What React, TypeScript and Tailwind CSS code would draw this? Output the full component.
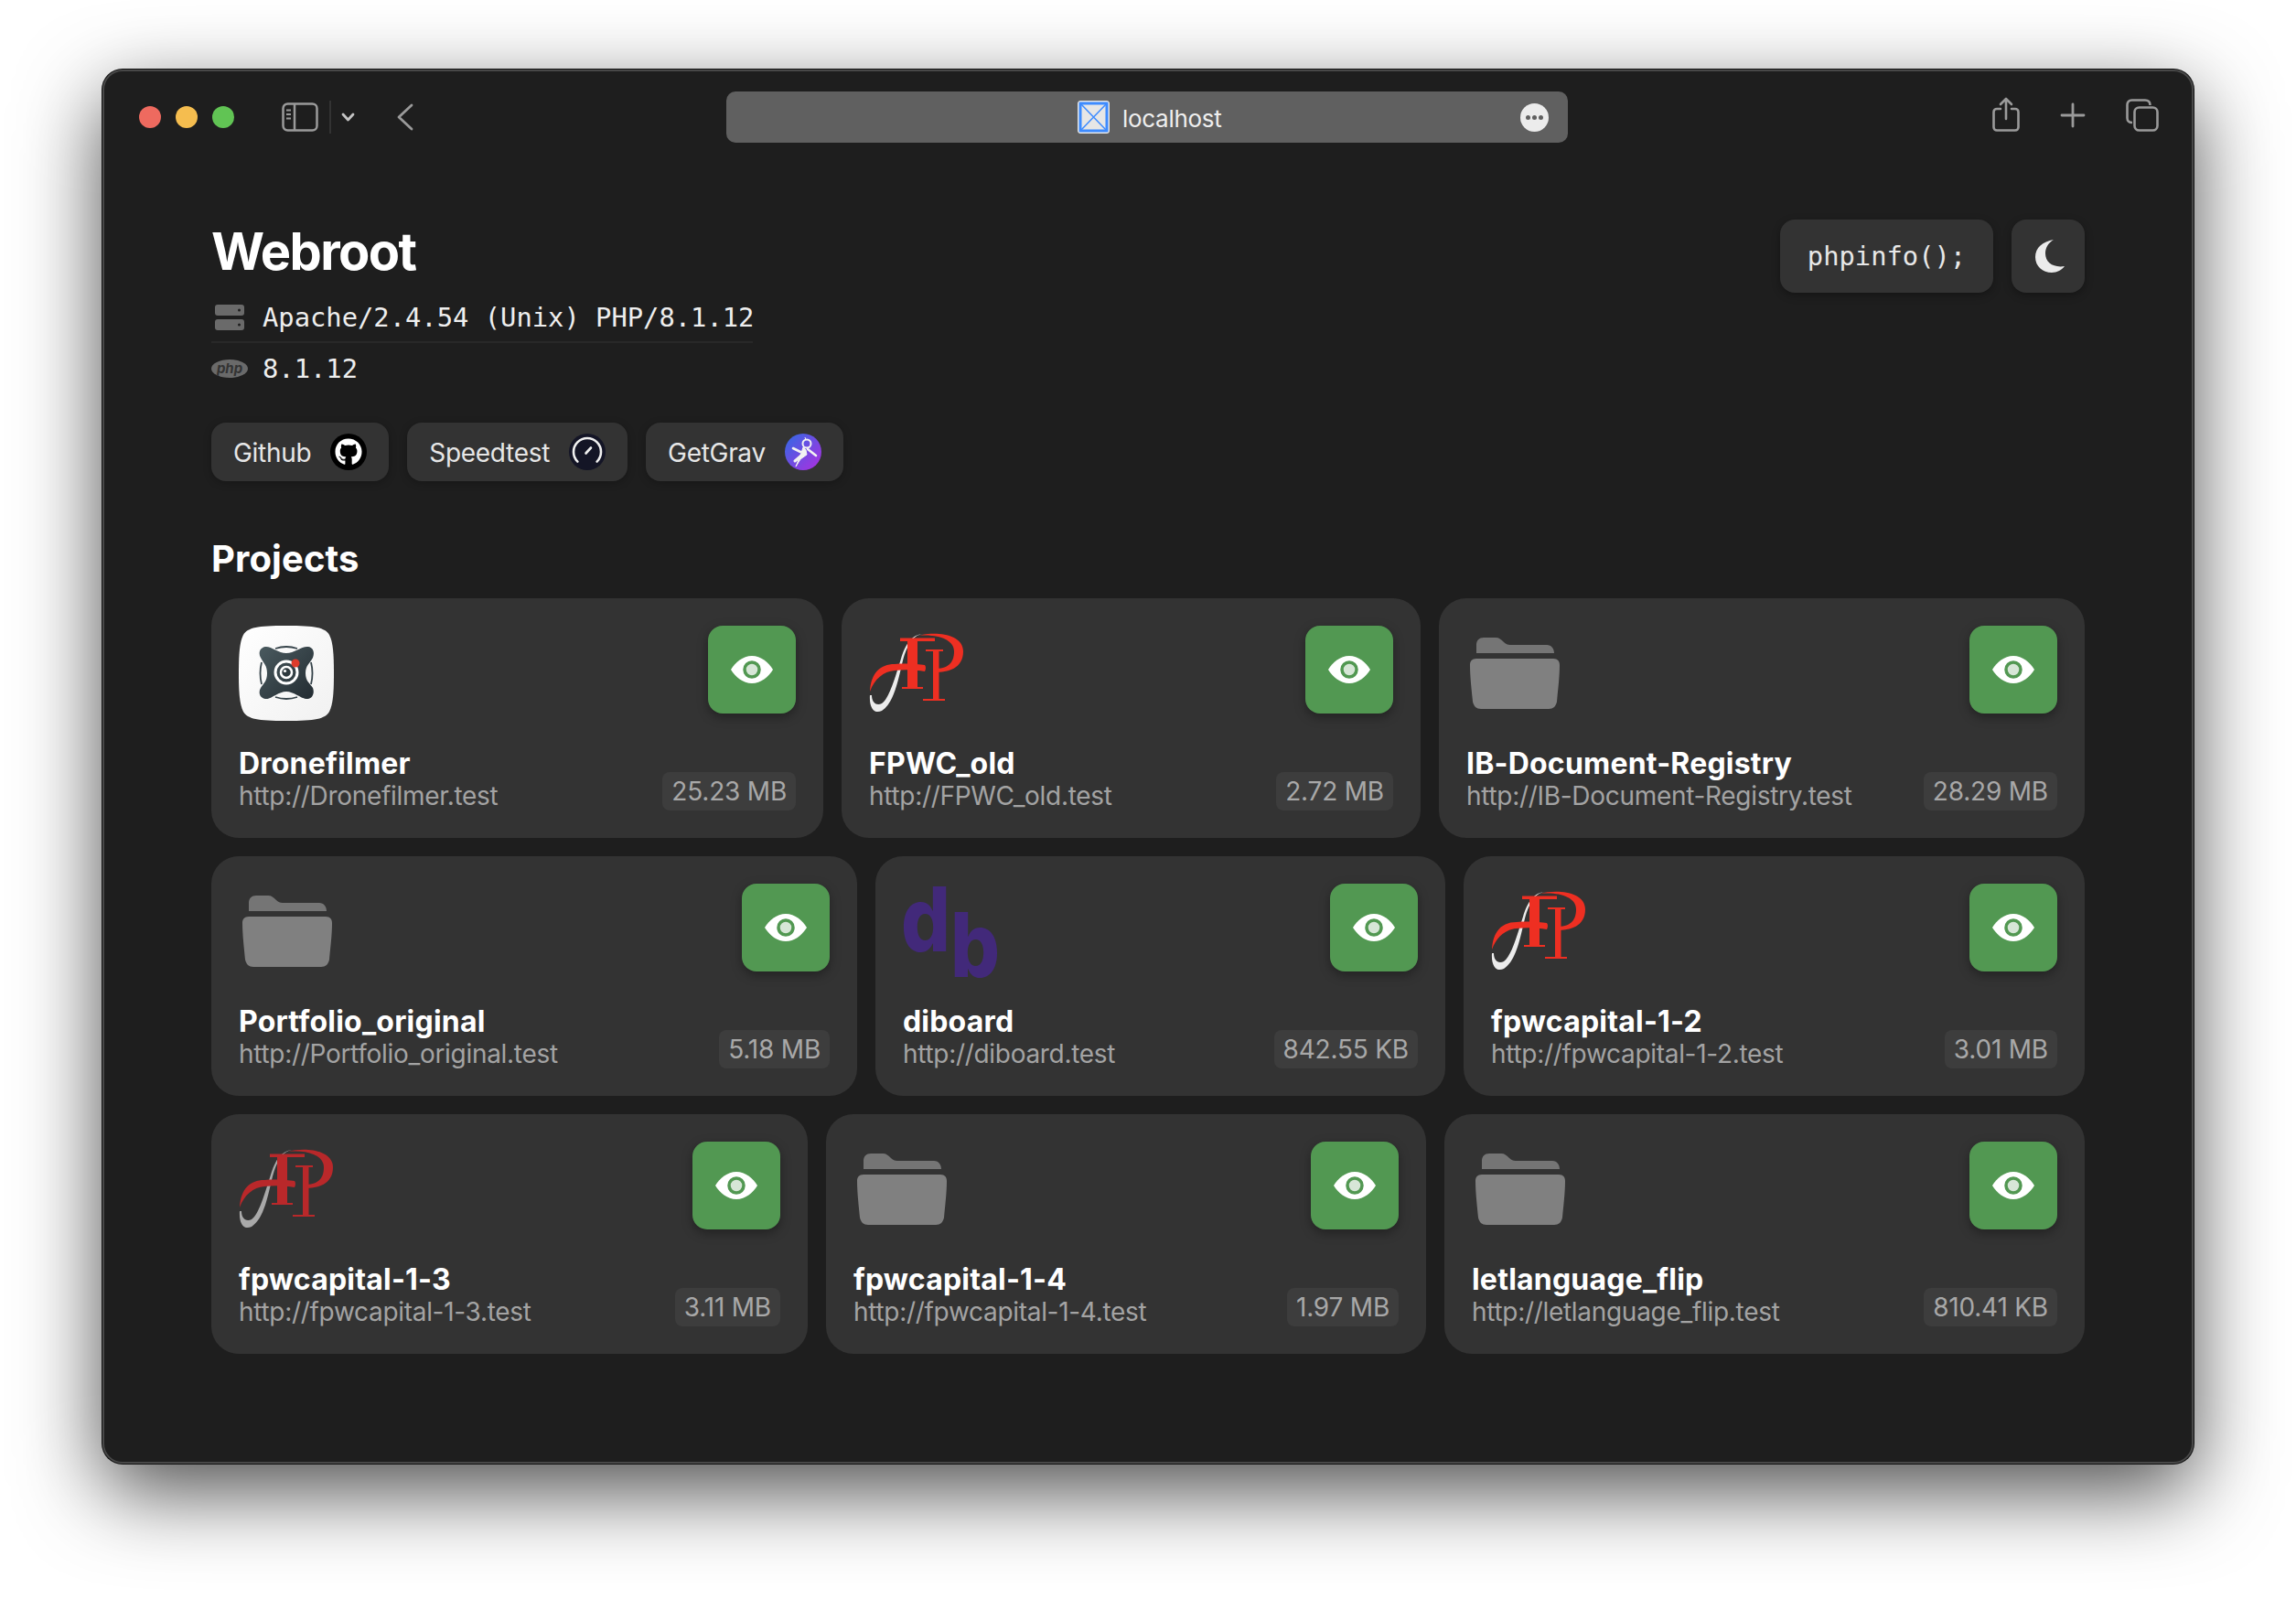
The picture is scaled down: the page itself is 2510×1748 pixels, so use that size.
import { FaGithub } from "react-icons/fa";

const ui = "font-['Inter','Liberation_Sans',sans-serif]";
const mono = "font-['DejaVu_Sans_Mono','Liberation_Mono',monospace]";

const DroneLogo = () => (
  <svg width="104" height="104" viewBox="0 0 104 104">
    <defs>
      <linearGradient id="droneBg" x1="0" y1="0" x2="1" y2="1">
        <stop offset="0" stopColor="#ffffff" />
        <stop offset="1" stopColor="#f1f1f1" />
      </linearGradient>
      <linearGradient id="droneMark" x1="0" y1="0" x2="1" y2="1">
        <stop offset="0" stopColor="#4a5a5f" />
        <stop offset="1" stopColor="#232c32" />
      </linearGradient>
    </defs>
    <path d="M52 0C84 0 94 2 99 10C103 18 104 30 104 52C104 74 103 86 99 94C94 102 84 104 52 104C20 104 10 102 5 94C1 86 0 74 0 52C0 30 1 18 5 10C10 2 20 0 52 0Z" fill="url(#droneBg)" />
    <path d="M29 23C35 22 43 30 52 30C61 30 69 22 76 23C82 24 83 30 81 35C78 41 73 43 73 52C73 61 78 63 81 68C83 73 81 79 76 80C69 81 61 72 52 72C43 72 35 81 29 80C23 79 21 73 24 68C27 63 31 61 31 52C31 43 27 41 24 35C21 30 23 24 29 23Z" fill="url(#droneMark)" />
    <path d="M40 25Q52 21 64 25M40 78Q52 82 64 78M25 40Q22 52 25 64M79 40Q82 52 79 64" fill="none" stroke="#36434a" strokeWidth="1.8" />
    <circle cx="52" cy="51" r="12" fill="none" stroke="#fff" strokeWidth="3" />
    <circle cx="52" cy="51" r="6" fill="#2d383d" stroke="#fff" strokeWidth="2.5" />
    <circle cx="50.5" cy="49.5" r="1.6" fill="#fff" />
    <circle cx="62" cy="41" r="4.5" fill="#dd3c2c" />
  </svg>
);

const FpLogo = ({ muted }: { muted?: boolean }) => {
  const red = muted ? "#b9282a" : "#ee2f22";
  const swoosh = muted ? "#a9a9a9" : "#ececec";
  return (
    <svg width="104" height="104" viewBox="0 0 104 104">
      <path d="M62 9C49 8 42 20 37 38C32 58 28 84 14 93C6 97 0 90 1 76L3 76C3 84 8 88 14 85C22 80 29 55 35 36C40 20 47 8 62 9Z" fill={swoosh} />
      <path d="M1 72C2 52 12 42 28 42C40 41 54 42 61 43Q63 46 61 50C50 48 38 48 28 49C16 50 6 58 1 72Z" fill={red} />
      <path d="M54 11C70 6 103 8 103 28C103 47 86 51 72 51L72 47C85 47 93 42 93 28C93 15 75 9 54 11Z" fill={red} />
      <rect x="42" y="14" width="11" height="54" fill={red} />
      <rect x="34" y="13.5" width="38" height="3.5" fill={red} />
      <rect x="36" y="67" width="23" height="2" fill={red} />
      <rect x="70" y="26" width="6.5" height="55" fill={red} />
      <rect x="62" y="26" width="19" height="2" fill={red} />
      <rect x="59" y="80" width="24" height="2" fill={red} />
    </svg>
  );
};

const FolderLogo = () => (
  <svg width="104" height="104" viewBox="0 0 104 104">
    <path d="M11 30V21C11 16 14 13 19 13H32C36 13 38 15 41 18C43 20 45 21 48 21H88C93 21 96 25 96 30Z" fill="#757575" />
    <path d="M11 36H95C100 36 102 39 102 43C102 56 100 72 99 83C98 88 95 91 90 91H16C11 91 8 88 7 83C6 72 4 56 4 43C4 39 6 36 11 36Z" fill="#808080" />
  </svg>
);

const DbLogo = () => (
  <svg className="overflow-visible" width="104" height="104" viewBox="0 0 104 104">
    <text x="-2" y="74" textLength="54" lengthAdjust="spacingAndGlyphs" fontFamily="Inter, sans-serif" fontSize="98" fontWeight="800" fill="#42297a">d</text>
    <text x="52" y="102" textLength="54" lengthAdjust="spacingAndGlyphs" fontFamily="Inter, sans-serif" fontSize="98" fontWeight="800" fill="#42297a">b</text>
  </svg>
);

const Eye = () => (
  <svg width="46" height="30" viewBox="0 0 46 30">
    <path d="M23 0C33 0 41 7 46 15C41 23 33 30 23 30C13 30 5 23 0 15C5 7 13 0 23 0Z" fill="#fff" />
    <circle cx="23" cy="15" r="8" fill="#d7e6d7" stroke="#529852" strokeWidth="3.5" />
  </svg>
);

const logos = {
  drone: <DroneLogo />,
  fp: <FpLogo />,
  fpMuted: <FpLogo muted />,
  folder: <FolderLogo />,
  db: <DbLogo />,
};

type Project = { name: string; size: string; logo: keyof typeof logos; width: string };

const rows: Project[][] = [
  [
    { name: "Dronefilmer", size: "25.23 MB", logo: "drone", width: "w-[669px]" },
    { name: "FPWC_old", size: "2.72 MB", logo: "fp", width: "w-[633px]" },
    { name: "IB-Document-Registry", size: "28.29 MB", logo: "folder", width: "flex-1" },
  ],
  [
    { name: "Portfolio_original", size: "5.18 MB", logo: "folder", width: "w-[706px]" },
    { name: "diboard", size: "842.55 KB", logo: "db", width: "w-[623px]" },
    { name: "fpwcapital-1-2", size: "3.01 MB", logo: "fp", width: "flex-1" },
  ],
  [
    { name: "fpwcapital-1-3", size: "3.11 MB", logo: "fpMuted", width: "w-[652px]" },
    { name: "fpwcapital-1-4", size: "1.97 MB", logo: "folder", width: "w-[656px]" },
    { name: "letlanguage_flip", size: "810.41 KB", logo: "folder", width: "flex-1" },
  ],
];

const ProjectCard = ({ project }: { project: Project }) => (
  <div className={`${project.width} rounded-[30px] bg-[#333333] p-[30px]`}>
    <div className="flex items-start justify-between">
      <div className="h-[104px] w-[104px]">{logos[project.logo]}</div>
      <button className="flex h-[96px] w-[96px] items-center justify-center rounded-[16px] bg-[#529852] shadow-[0_4px_12px_rgba(0,0,0,0.35)]">
        <Eye />
      </button>
    </div>
    <div className="mt-[28px] flex items-end justify-between">
      <div>
        <div className="h-[36px] text-[32px] leading-[38px] font-bold tracking-[0.2px] text-white">
          {project.name}
        </div>
        <div className="h-[34px] text-[28px] leading-[36px] tracking-[-0.3px] text-[#a3a3a3]">
          http://{project.name}.test
        </div>
      </div>
      <div className="flex h-[42px] items-center rounded-[8px] bg-[#3d3d3d] px-[10px] pb-[1px] text-[28px] tracking-[-0.2px] text-[#a8a8a8]">
        {project.size}
      </div>
    </div>
  </div>
);

const LinkPill = ({ label, children }: { label: string; children: React.ReactNode }) => (
  <div className="flex h-[64px] items-center gap-[21px] rounded-[16px] bg-[#333333] px-[24px] text-[28px] tracking-[-0.3px] text-[#e6e6e6] shadow-[0_2px_8px_rgba(0,0,0,0.25)]">
    <span className="pt-[2px]">{label}</span>
    {children}
  </div>
);

export default function App() {
  return (
    <div className={`${ui} h-[1748px] w-[2510px] overflow-hidden bg-white pt-[76px] pl-[112px]`}>
      <div className="h-[1524px] w-[2286px] rounded-[22px] border-2 border-[#484848] bg-[#1e1e1e] shadow-[0_0_0_1px_#111,0_30px_90px_rgba(0,0,0,0.7)]">
        {/* toolbar */}
        <div className="flex h-[100px] items-center pr-[36px] pl-[38px]">
          <div className="flex w-[642px] items-center">
            <div className="flex gap-[16px]">
              <div className="h-[24px] w-[24px] rounded-full bg-[#ee6a5f]" />
              <div className="h-[24px] w-[24px] rounded-full bg-[#f5bd4f]" />
              <div className="h-[24px] w-[24px] rounded-full bg-[#61c454]" />
            </div>
            <svg className="ml-[52px]" width="40" height="32" viewBox="0 0 40 32" fill="none" stroke="#9a9a9a" strokeWidth="2.5">
              <rect x="1.5" y="1.5" width="37" height="29" rx="5" />
              <path d="M14 2V30" />
              <path d="M5 8.5H10M5 13H10M5 17.5H10" strokeWidth="2" />
            </svg>
            <div className="ml-[12px] h-[36px] w-[2px] bg-[#333333]" />
            <svg className="ml-[11px]" width="15" height="10" viewBox="0 0 15 10" fill="none" stroke="#c4c4c4" strokeWidth="2.8" strokeLinecap="round" strokeLinejoin="round">
              <path d="M2 2L7.5 8L13 2" />
            </svg>
            <svg className="ml-[46px]" width="18" height="30" viewBox="0 0 18 30" fill="none" stroke="#9a9a9a" strokeWidth="2.8" strokeLinecap="round" strokeLinejoin="round">
              <path d="M16 2L2 15L16 28" />
            </svg>
          </div>
          <div className="relative flex h-[56px] w-[920px] items-center rounded-[10px] bg-[#606060] pr-[21px] pl-[384px]">
            <div className="relative h-[36px] w-[35px] overflow-hidden rounded-[3px] border border-[#e8e8e8] bg-[#e6e6e6]">
              <svg width="33" height="34" viewBox="0 0 33 34" fill="none" stroke="#3d8bff">
                <rect x="2" y="2" width="29" height="30" strokeWidth="3" />
                <path d="M3 3L30 31M30 3L3 31" strokeWidth="1.5" />
              </svg>
            </div>
            <span className="ml-[14px] pt-[2px] text-[26px] tracking-[-0.3px] text-[#eeeeee]">localhost</span>
            <div className="ml-auto flex h-[31px] w-[31px] items-center justify-center gap-[2px] rounded-full bg-[#ececec]">
              <span className="h-[5px] w-[5px] rounded-full bg-[#606060]" />
              <span className="h-[5px] w-[5px] rounded-full bg-[#606060]" />
              <span className="h-[5px] w-[5px] rounded-full bg-[#606060]" />
            </div>
          </div>
          <div className="ml-auto mb-[4px] flex items-center gap-[44px]">
            <svg className="mb-[2px]" width="30" height="38" viewBox="0 0 30 38" fill="none" stroke="#9a9a9a" strokeWidth="2.6" strokeLinecap="round" strokeLinejoin="round">
              <path d="M9 13H5C3 13 1.5 14.5 1.5 16.5V33C1.5 35 3 36.5 5 36.5H25C27 36.5 28.5 35 28.5 33V16.5C28.5 14.5 27 13 25 13H21" />
              <path d="M15 24V2M9 8L15 2L21 8" />
            </svg>
            <svg width="28" height="28" viewBox="0 0 28 28" fill="none" stroke="#9a9a9a" strokeWidth="2.8" strokeLinecap="round">
              <path d="M14 2V26M2 14H26" />
            </svg>
            <svg width="36" height="36" viewBox="0 0 36 36" fill="none" stroke="#9a9a9a" strokeWidth="2.6">
              <path d="M7 26C3.5 26 1.5 24.5 1.5 21V6.5C1.5 3.5 3.5 1.5 6.5 1.5H21C24.5 1.5 26.5 3.5 26.5 7" />
              <rect x="9.5" y="9.5" width="25" height="25" rx="5" />
            </svg>
          </div>
        </div>

        {/* page */}
        <div className="px-[117px] pt-[62px]">
          <div className="flex items-start justify-between">
            <div>
              <h1 className="h-[70px] text-[56px] leading-[70px] font-bold tracking-[-1.6px] text-white">Webroot</h1>
              <div className={`${mono} mt-[17px] w-[592px] border-b-2 border-[#282828] pb-[6px] text-[28.8px] whitespace-nowrap text-[#eeeeee]`}>
                <div className="flex h-[40px] items-center gap-[16px]">
                  <div className="flex w-[40px] shrink-0 justify-center">
                    <svg width="32" height="28" viewBox="0 0 32 28">
                      <rect width="32" height="12" rx="3" fill="#6a6a6a" />
                      <rect y="16" width="32" height="12" rx="3" fill="#6a6a6a" />
                      <circle cx="26.5" cy="6" r="1.5" fill="#1e1e1e" />
                      <circle cx="26.5" cy="22" r="1.5" fill="#1e1e1e" />
                    </svg>
                  </div>
                  <span className="pt-[2px]">Apache/2.4.54 (Unix) PHP/8.1.12</span>
                </div>
              </div>
              <div className={`${mono} mt-[8px] flex h-[40px] items-center gap-[16px] text-[28.8px] text-[#eeeeee]`}>
                <svg className="shrink-0" width="40" height="20" viewBox="0 0 40 20">
                  <ellipse cx="20" cy="10" rx="20" ry="10" fill="#6a6a6a" />
                  <text x="20" y="14.5" textAnchor="middle" fontFamily="Inter, sans-serif" fontSize="15" fontStyle="italic" fontWeight="700" fill="#333333">php</text>
                </svg>
                <span className="pt-[2px]">8.1.12</span>
              </div>
              <div className="mt-[39px] flex gap-[20px]">
                <LinkPill label="Github">
                  <div className="flex h-[40px] w-[40px] items-center justify-center rounded-full bg-black">
                    <FaGithub className="h-[30px] w-[30px] text-white" />
                  </div>
                </LinkPill>
                <LinkPill label="Speedtest">
                  <svg width="40" height="40" viewBox="0 0 40 40">
                    <circle cx="20" cy="20" r="20" fill="#141526" />
                    <path d="M9.4 30.6A15 15 0 1 1 30.6 30.6" fill="none" stroke="#f0f0f0" strokeWidth="2.6" strokeLinecap="round" />
                    <path d="M18.5 21.5L24 15.5" fill="none" stroke="#f0f0f0" strokeWidth="2.6" strokeLinecap="round" />
                  </svg>
                </LinkPill>
                <LinkPill label="GetGrav">
                  <svg width="40" height="40" viewBox="0 0 40 40">
                    <defs>
                      <linearGradient id="grav" x1="0" y1="0" x2="1" y2="1">
                        <stop offset="0" stopColor="#2f6be4" />
                        <stop offset="1" stopColor="#b02de0" />
                      </linearGradient>
                    </defs>
                    <circle cx="20" cy="20" r="20" fill="url(#grav)" />
                    <circle cx="24" cy="11" r="4.5" fill="none" stroke="#f2f2f2" strokeWidth="2" />
                    <path d="M22 4L23 7M20 15L18 21L12 36L17 28L24 23L23 18Z" fill="#f2f2f2" stroke="#f2f2f2" strokeLinejoin="round" />
                    <path d="M17 20L9 16M25 17L34 24" fill="none" stroke="#f2f2f2" strokeWidth="2.6" strokeLinecap="round" />
                    <path d="M18 24L11 30" fill="none" stroke="#f2f2f2" strokeWidth="3" strokeLinecap="round" />
                  </svg>
                </LinkPill>
              </div>
            </div>
            <div className="flex gap-[20px]">
              <button className={`${mono} flex h-[80px] w-[233px] items-center justify-center rounded-[16px] bg-[#333333] pt-[2px] text-[28.8px] text-[#e8e8e8] shadow-[0_3px_10px_rgba(0,0,0,0.3)]`}>
                phpinfo();
              </button>
              <button className="flex h-[80px] w-[80px] items-center justify-center rounded-[16px] bg-[#333333] shadow-[0_3px_10px_rgba(0,0,0,0.3)]">
                <svg className="ml-[3px]" width="32" height="36" viewBox="0 0 32 36">
                  <path d="M20 0C8 2 0 9 0 19C0 29 8 36 18 36C24 36 29 33 32 29C20 31 11 25 11 15C11 8 15 3 20 0Z" fill="#ebebeb" />
                </svg>
              </button>
            </div>
          </div>

          <h2 className="mt-[60px] h-[50px] text-[40px] leading-[50px] font-bold tracking-[0.1px] text-white">Projects</h2>

          <div className="mt-[18px] flex flex-col gap-[20px]">
            {rows.map((row) => (
              <div key={row[0].name} className="flex gap-[20px]">
                {row.map((project) => (
                  <ProjectCard key={project.name} project={project} />
                ))}
              </div>
            ))}
          </div>
        </div>
      </div>
    </div>
  );
}
